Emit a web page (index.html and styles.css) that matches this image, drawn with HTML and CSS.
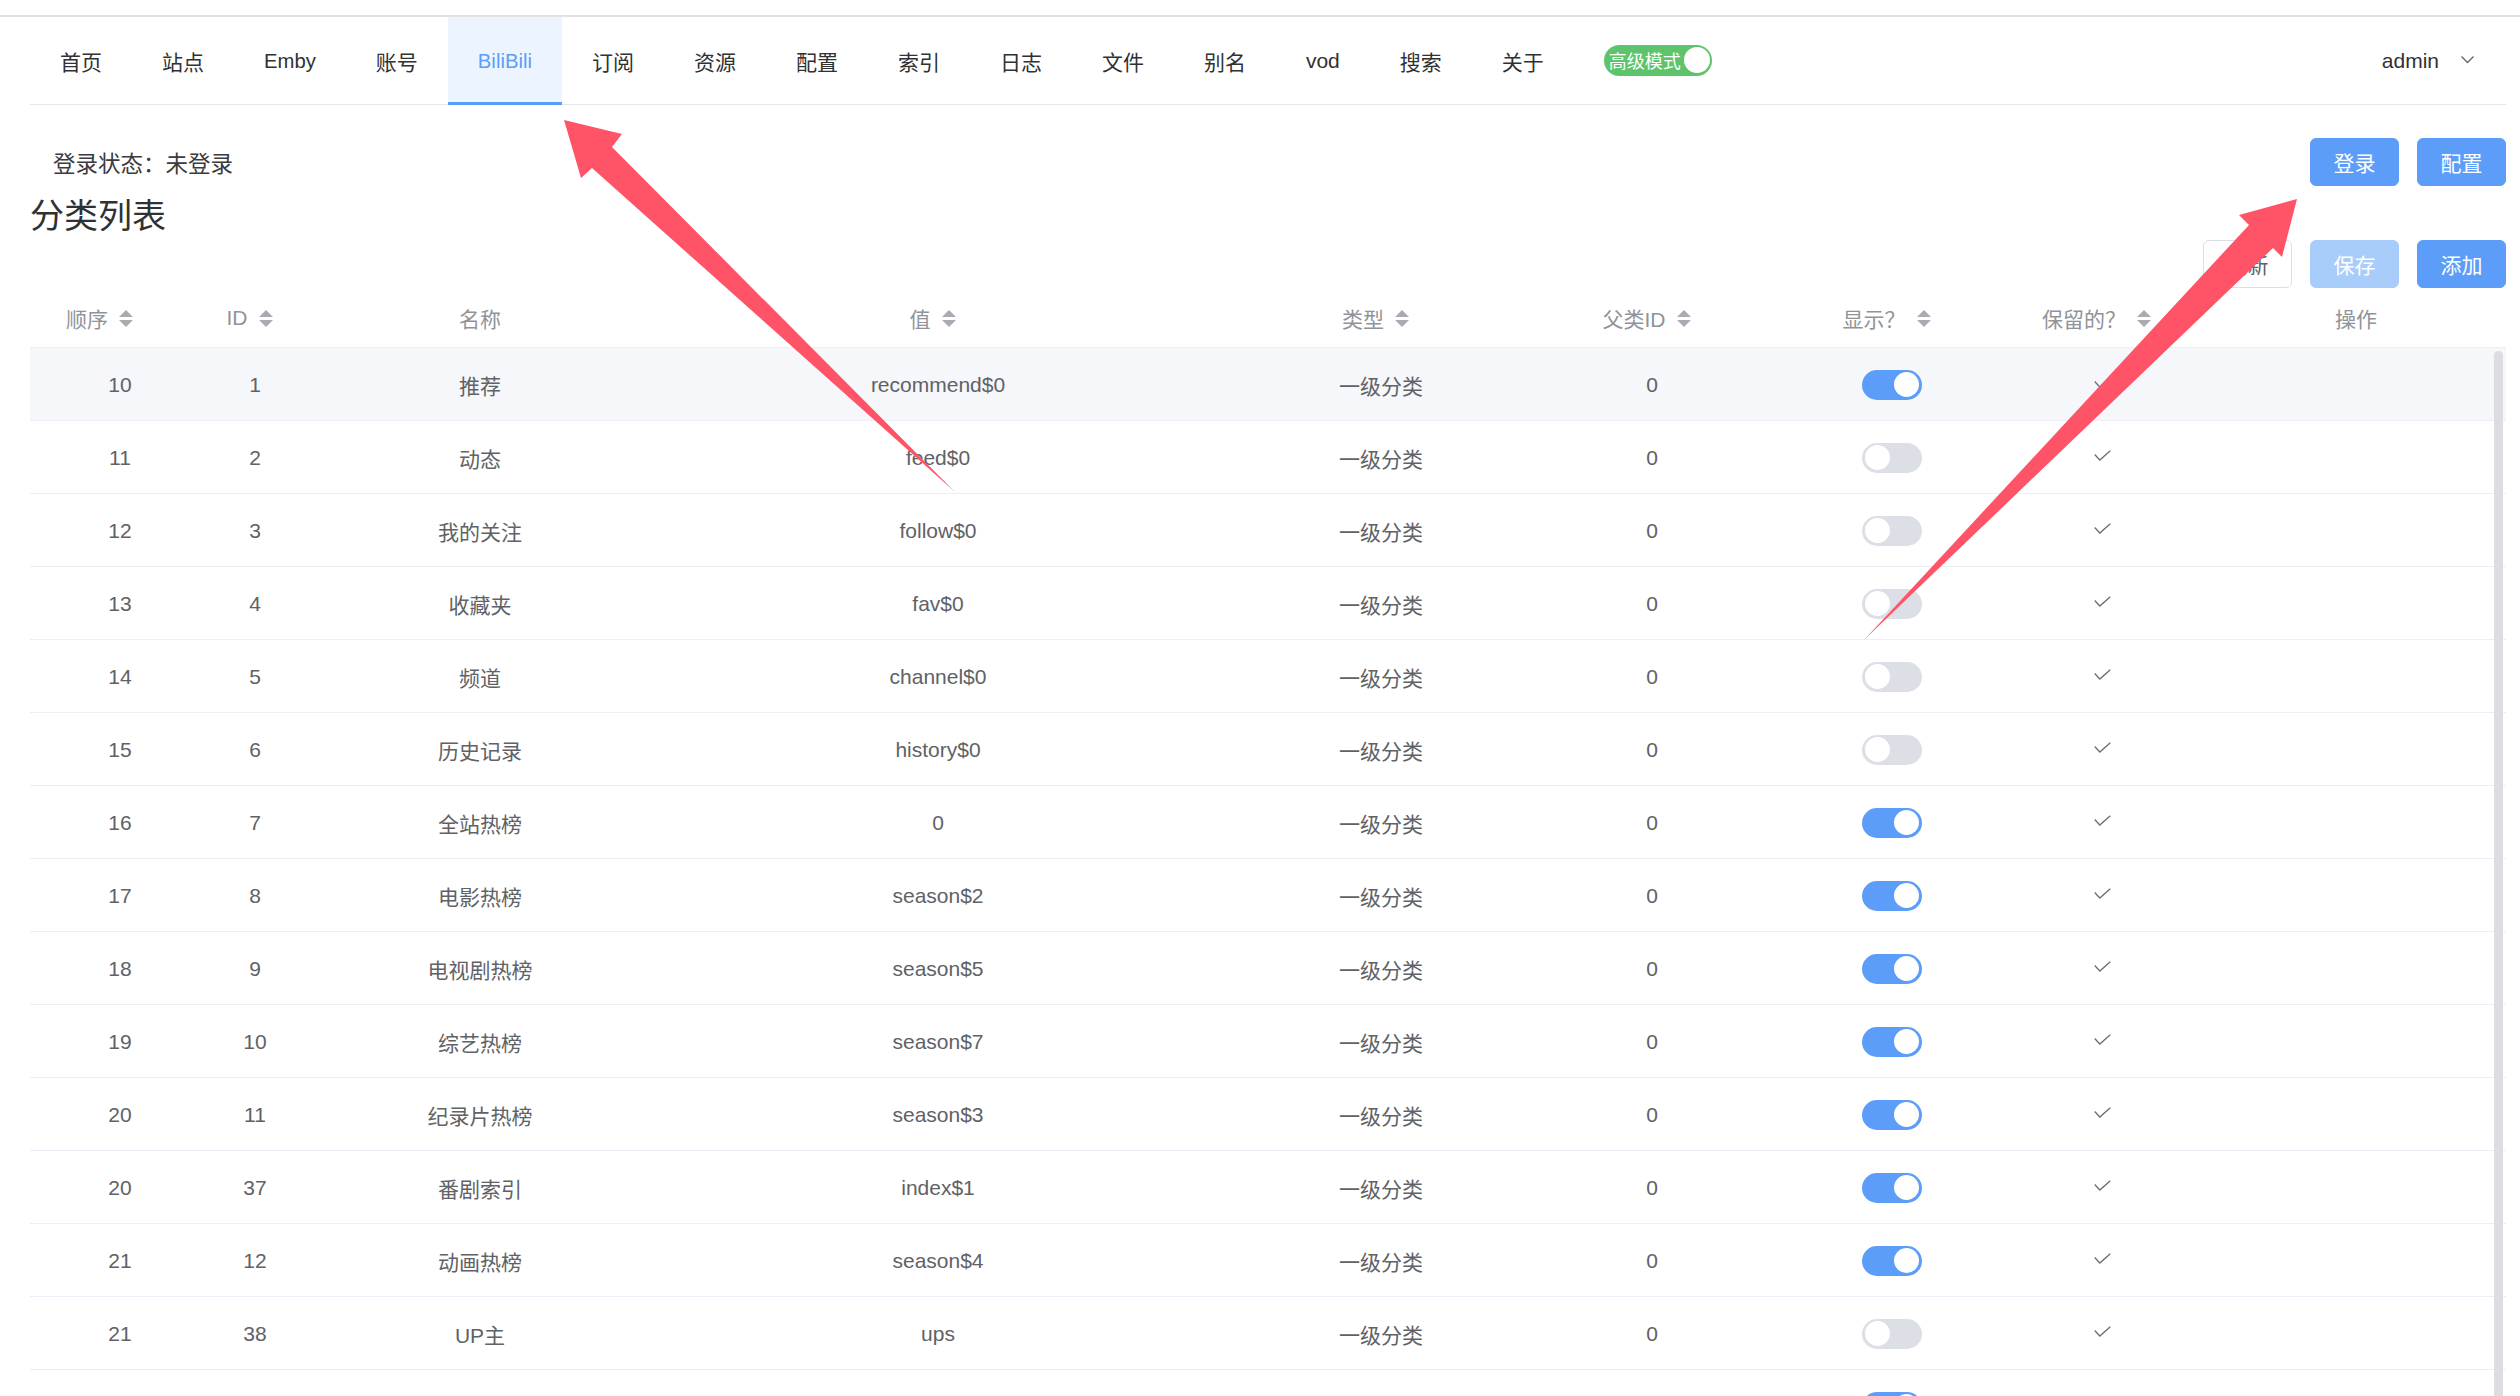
FILE: index.html
```html
<!DOCTYPE html>
<html lang="zh-CN">
<head>
<meta charset="utf-8">
<title>BiliBili - 分类列表</title>
<link rel="stylesheet" href="styles.css">
</head>
<body>
<div class="topline"></div>
<div class="app">
  <nav class="menu">
    <a class="item">首页</a>
    <a class="item">站点</a>
    <a class="item latin">Emby</a>
    <a class="item">账号</a>
    <a class="item latin active">BiliBili</a>
    <a class="item">订阅</a>
    <a class="item">资源</a>
    <a class="item">配置</a>
    <a class="item">索引</a>
    <a class="item">日志</a>
    <a class="item">文件</a>
    <a class="item">别名</a>
    <a class="item">vod</a>
    <a class="item">搜索</a>
    <a class="item">关于</a>
    <div class="item"><span class="mode"><span class="mode-text">高级模式</span><span class="mode-knob"></span></span></div>
    <div class="spacer"></div>
    <div class="item user">admin<svg class="chev" width="13" height="8" viewBox="0 0 13 8"><polyline points="0.5,0.5 6.5,6.5 12.5,0.5" fill="none" stroke="#606266" stroke-width="1.3"/></svg></div>
  </nav>

  <main class="content">
    <div class="status-row">
      <span class="status">登录状态：未登录</span>
      <div class="btns">
        <button class="btn primary">登录</button>
        <button class="btn primary">配置</button>
      </div>
    </div>
    <h2 class="title">分类列表</h2>
    <div class="toolbar">
      <button class="btn">刷新</button>
      <button class="btn primary disabled">保存</button>
      <button class="btn primary">添加</button>
    </div>

    <div class="table">
      <div class="row head">
        <div class="th first">顺序<span class="caret"><i class="up"></i><i class="down"></i></span></div>
        <div class="th">ID<span class="caret"><i class="up"></i><i class="down"></i></span></div>
        <div class="th">名称</div>
        <div class="th">值<span class="caret"><i class="up"></i><i class="down"></i></span></div>
        <div class="th">类型<span class="caret"><i class="up"></i><i class="down"></i></span></div>
        <div class="th">父类ID<span class="caret"><i class="up"></i><i class="down"></i></span></div>
        <div class="th">显示？<span class="caret"><i class="up"></i><i class="down"></i></span></div>
        <div class="th">保留的？<span class="caret"><i class="up"></i><i class="down"></i></span></div>
        <div class="th last">操作</div>
      </div>
      <div class="tbody">
        <div class="row hover"><div class="td">10</div><div class="td">1</div><div class="td">推荐</div><div class="td">recommend$0</div><div class="td">一级分类</div><div class="td">0</div><div class="td"><span class="sw on"><i></i></span></div><div class="td"><svg class="check" width="17" height="11" viewBox="0 0 17 11"><polyline points="0.7,4.5 5.8,10 16.3,0.7" fill="none" stroke="#6b6d72" stroke-width="1.3"/></svg></div><div class="td"></div></div>
        <div class="row"><div class="td">11</div><div class="td">2</div><div class="td">动态</div><div class="td">feed$0</div><div class="td">一级分类</div><div class="td">0</div><div class="td"><span class="sw"><i></i></span></div><div class="td"><svg class="check" width="17" height="11" viewBox="0 0 17 11"><polyline points="0.7,4.5 5.8,10 16.3,0.7" fill="none" stroke="#6b6d72" stroke-width="1.3"/></svg></div><div class="td"></div></div>
        <div class="row"><div class="td">12</div><div class="td">3</div><div class="td">我的关注</div><div class="td">follow$0</div><div class="td">一级分类</div><div class="td">0</div><div class="td"><span class="sw"><i></i></span></div><div class="td"><svg class="check" width="17" height="11" viewBox="0 0 17 11"><polyline points="0.7,4.5 5.8,10 16.3,0.7" fill="none" stroke="#6b6d72" stroke-width="1.3"/></svg></div><div class="td"></div></div>
        <div class="row"><div class="td">13</div><div class="td">4</div><div class="td">收藏夹</div><div class="td">fav$0</div><div class="td">一级分类</div><div class="td">0</div><div class="td"><span class="sw"><i></i></span></div><div class="td"><svg class="check" width="17" height="11" viewBox="0 0 17 11"><polyline points="0.7,4.5 5.8,10 16.3,0.7" fill="none" stroke="#6b6d72" stroke-width="1.3"/></svg></div><div class="td"></div></div>
        <div class="row"><div class="td">14</div><div class="td">5</div><div class="td">频道</div><div class="td">channel$0</div><div class="td">一级分类</div><div class="td">0</div><div class="td"><span class="sw"><i></i></span></div><div class="td"><svg class="check" width="17" height="11" viewBox="0 0 17 11"><polyline points="0.7,4.5 5.8,10 16.3,0.7" fill="none" stroke="#6b6d72" stroke-width="1.3"/></svg></div><div class="td"></div></div>
        <div class="row"><div class="td">15</div><div class="td">6</div><div class="td">历史记录</div><div class="td">history$0</div><div class="td">一级分类</div><div class="td">0</div><div class="td"><span class="sw"><i></i></span></div><div class="td"><svg class="check" width="17" height="11" viewBox="0 0 17 11"><polyline points="0.7,4.5 5.8,10 16.3,0.7" fill="none" stroke="#6b6d72" stroke-width="1.3"/></svg></div><div class="td"></div></div>
        <div class="row"><div class="td">16</div><div class="td">7</div><div class="td">全站热榜</div><div class="td">0</div><div class="td">一级分类</div><div class="td">0</div><div class="td"><span class="sw on"><i></i></span></div><div class="td"><svg class="check" width="17" height="11" viewBox="0 0 17 11"><polyline points="0.7,4.5 5.8,10 16.3,0.7" fill="none" stroke="#6b6d72" stroke-width="1.3"/></svg></div><div class="td"></div></div>
        <div class="row"><div class="td">17</div><div class="td">8</div><div class="td">电影热榜</div><div class="td">season$2</div><div class="td">一级分类</div><div class="td">0</div><div class="td"><span class="sw on"><i></i></span></div><div class="td"><svg class="check" width="17" height="11" viewBox="0 0 17 11"><polyline points="0.7,4.5 5.8,10 16.3,0.7" fill="none" stroke="#6b6d72" stroke-width="1.3"/></svg></div><div class="td"></div></div>
        <div class="row"><div class="td">18</div><div class="td">9</div><div class="td">电视剧热榜</div><div class="td">season$5</div><div class="td">一级分类</div><div class="td">0</div><div class="td"><span class="sw on"><i></i></span></div><div class="td"><svg class="check" width="17" height="11" viewBox="0 0 17 11"><polyline points="0.7,4.5 5.8,10 16.3,0.7" fill="none" stroke="#6b6d72" stroke-width="1.3"/></svg></div><div class="td"></div></div>
        <div class="row"><div class="td">19</div><div class="td">10</div><div class="td">综艺热榜</div><div class="td">season$7</div><div class="td">一级分类</div><div class="td">0</div><div class="td"><span class="sw on"><i></i></span></div><div class="td"><svg class="check" width="17" height="11" viewBox="0 0 17 11"><polyline points="0.7,4.5 5.8,10 16.3,0.7" fill="none" stroke="#6b6d72" stroke-width="1.3"/></svg></div><div class="td"></div></div>
        <div class="row"><div class="td">20</div><div class="td">11</div><div class="td">纪录片热榜</div><div class="td">season$3</div><div class="td">一级分类</div><div class="td">0</div><div class="td"><span class="sw on"><i></i></span></div><div class="td"><svg class="check" width="17" height="11" viewBox="0 0 17 11"><polyline points="0.7,4.5 5.8,10 16.3,0.7" fill="none" stroke="#6b6d72" stroke-width="1.3"/></svg></div><div class="td"></div></div>
        <div class="row"><div class="td">20</div><div class="td">37</div><div class="td">番剧索引</div><div class="td">index$1</div><div class="td">一级分类</div><div class="td">0</div><div class="td"><span class="sw on"><i></i></span></div><div class="td"><svg class="check" width="17" height="11" viewBox="0 0 17 11"><polyline points="0.7,4.5 5.8,10 16.3,0.7" fill="none" stroke="#6b6d72" stroke-width="1.3"/></svg></div><div class="td"></div></div>
        <div class="row"><div class="td">21</div><div class="td">12</div><div class="td">动画热榜</div><div class="td">season$4</div><div class="td">一级分类</div><div class="td">0</div><div class="td"><span class="sw on"><i></i></span></div><div class="td"><svg class="check" width="17" height="11" viewBox="0 0 17 11"><polyline points="0.7,4.5 5.8,10 16.3,0.7" fill="none" stroke="#6b6d72" stroke-width="1.3"/></svg></div><div class="td"></div></div>
        <div class="row"><div class="td">21</div><div class="td">38</div><div class="td">UP主</div><div class="td">ups</div><div class="td">一级分类</div><div class="td">0</div><div class="td"><span class="sw"><i></i></span></div><div class="td"><svg class="check" width="17" height="11" viewBox="0 0 17 11"><polyline points="0.7,4.5 5.8,10 16.3,0.7" fill="none" stroke="#6b6d72" stroke-width="1.3"/></svg></div><div class="td"></div></div>
        <div class="row"><div class="td"></div><div class="td"></div><div class="td"></div><div class="td"></div><div class="td"></div><div class="td"></div><div class="td"><span class="sw on"><i></i></span></div><div class="td"></div><div class="td"></div></div>
        <div class="scroll-thumb"></div>
      </div>
    </div>
  </main>
</div>

<svg class="annotations" width="2520" height="1396" viewBox="0 0 2520 1396">
  <polygon points="564,120 622,134 612,147 955,492 592,168 581,178" fill="#ff5367"/>
  <polygon points="2297,199 2239,215 2249,225 1864,640 2273,248 2282,257" fill="#ff5367"/>
</svg>
</body>
</html>
```

FILE: styles.css
```css
html, body {
  margin: 0;
  padding: 0;
  background: #ffffff;
  overflow: hidden;
  height: 100%;
}

body {
  font-family: "Liberation Sans", "Noto Sans CJK SC", sans-serif;
  color: #303133;
  position: relative;
}

.topline {
  margin-top: 15px;
  height: 2px;
  background: #e2e2e2;
}

.app {
  padding: 0 14px 0 30px;
}

/* ---------- top menu ---------- */
.menu {
  display: flex;
  align-items: flex-start;
  height: 88px;
  box-sizing: border-box;
  border-bottom: 1px solid #e4e7ed;
}

.item {
  display: flex;
  align-items: center;
  height: 88px;
  box-sizing: border-box;
  padding: 0 30px;
  font-size: 21px;
  color: #303133;
  white-space: nowrap;
  cursor: pointer;
}

.item.latin {
  font-size: 20.3px;
}

.item.active {
  background: #ecf5ff;
  color: #5b9df8;
  border-bottom: 3px solid #5b9df8;
  padding-top: 3px;
}

.spacer {
  flex: 1;
}

.user {
  padding: 0 32px 0 30px;
  color: #303133;
}

.chev {
  margin-left: 22px;
  margin-top: -2px;
}

.mode {
  display: inline-flex;
  align-items: center;
  width: 108px;
  height: 31px;
  box-sizing: border-box;
  padding: 0 2px 0 5px;
  border-radius: 16px;
  background: #5dc46b;
  margin-top: -2px;
}

.mode-text {
  font-family: "Noto Sans CJK SC", sans-serif;
  font-size: 18px;
  line-height: 31px;
  color: #ffffff;
  width: 75px;
}

.mode-knob {
  width: 26px;
  height: 26px;
  border-radius: 50%;
  background: #ffffff;
}

/* ---------- content ---------- */
.content {
  display: flex;
  flex-direction: column;
}

.status-row {
  margin-top: 33px;
  height: 48px;
  display: flex;
  align-items: center;
  justify-content: space-between;
}

.status {
  padding-left: 23px;
  font-family: "Noto Sans CJK SC", sans-serif;
  font-size: 22.5px;
  color: #3a3c40;
}

.btns, .toolbar {
  display: flex;
  gap: 18px;
  justify-content: flex-end;
}

.title {
  margin: 4px 0 0;
  font-family: "Noto Sans CJK SC", sans-serif;
  font-size: 34px;
  font-weight: 400;
  line-height: 48px;
  color: #303133;
}

.toolbar {
  margin-top: 2px;
  height: 48px;
}

.btn {
  height: 48px;
  box-sizing: border-box;
  padding: 0 22px;
  min-width: 89px;
  border: 1px solid #dcdfe6;
  border-radius: 6px;
  background: #ffffff;
  color: #606266;
  font-family: "Noto Sans CJK SC", sans-serif;
  font-size: 21px;
  cursor: pointer;
}

.btn.primary {
  background: #5b9df8;
  border-color: #5b9df8;
  color: #ffffff;
}

.btn.primary.disabled {
  background: #a9cdfb;
  border-color: #a9cdfb;
  cursor: not-allowed;
}

/* ---------- table ---------- */
.table {
  display: flex;
  flex-direction: column;
}

.row {
  display: grid;
  grid-template-columns: 180px 90px 360px 556px 330px 212px 268px 152px 1fr;
  height: 73px;
  box-sizing: border-box;
  border-bottom: 1px solid #ebeef5;
}

.row.head {
  height: 60px;
}

.row.hover {
  background: #f5f7fa;
}

.th, .td {
  display: flex;
  align-items: center;
  justify-content: center;
  font-size: 21px;
  white-space: nowrap;
}

.th {
  color: #909399;
  padding-top: 1px;
}

.th.first {
  padding-right: 30px;
}

.th.last {
  padding-left: 28px;
}

.td {
  color: #606266;
  padding-top: 1px;
}

.caret {
  display: inline-flex;
  flex-direction: column;
  gap: 3px;
  width: 36px;
  box-sizing: border-box;
  padding-left: 11px;
}

.caret i {
  display: block;
  width: 0;
  height: 0;
  border-left: 7px solid transparent;
  border-right: 7px solid transparent;
}

.caret i.up {
  border-bottom: 7px solid #a8abb2;
}

.caret i.down {
  border-top: 7px solid #a8abb2;
}

.tbody {
  position: relative;
}

.scroll-thumb {
  position: absolute;
  top: 3px;
  right: 3px;
  width: 9px;
  height: 1300px;
  border-radius: 5px;
  background: #dcdde0;
}

/* switches */
.sw {
  display: flex;
  align-items: center;
  justify-content: flex-start;
  width: 60px;
  height: 30px;
  box-sizing: border-box;
  padding: 0 3px;
  border-radius: 15px;
  background: #dcdfe6;
}

.sw i {
  width: 25px;
  height: 25px;
  border-radius: 50%;
  background: #ffffff;
}

.sw.on {
  background: #5b9df8;
  justify-content: flex-end;
}

.check {
  margin-top: -5px;
}

/* annotation arrows */
.annotations {
  position: absolute;
  top: 0;
  left: 0;
  pointer-events: none;
}
```
